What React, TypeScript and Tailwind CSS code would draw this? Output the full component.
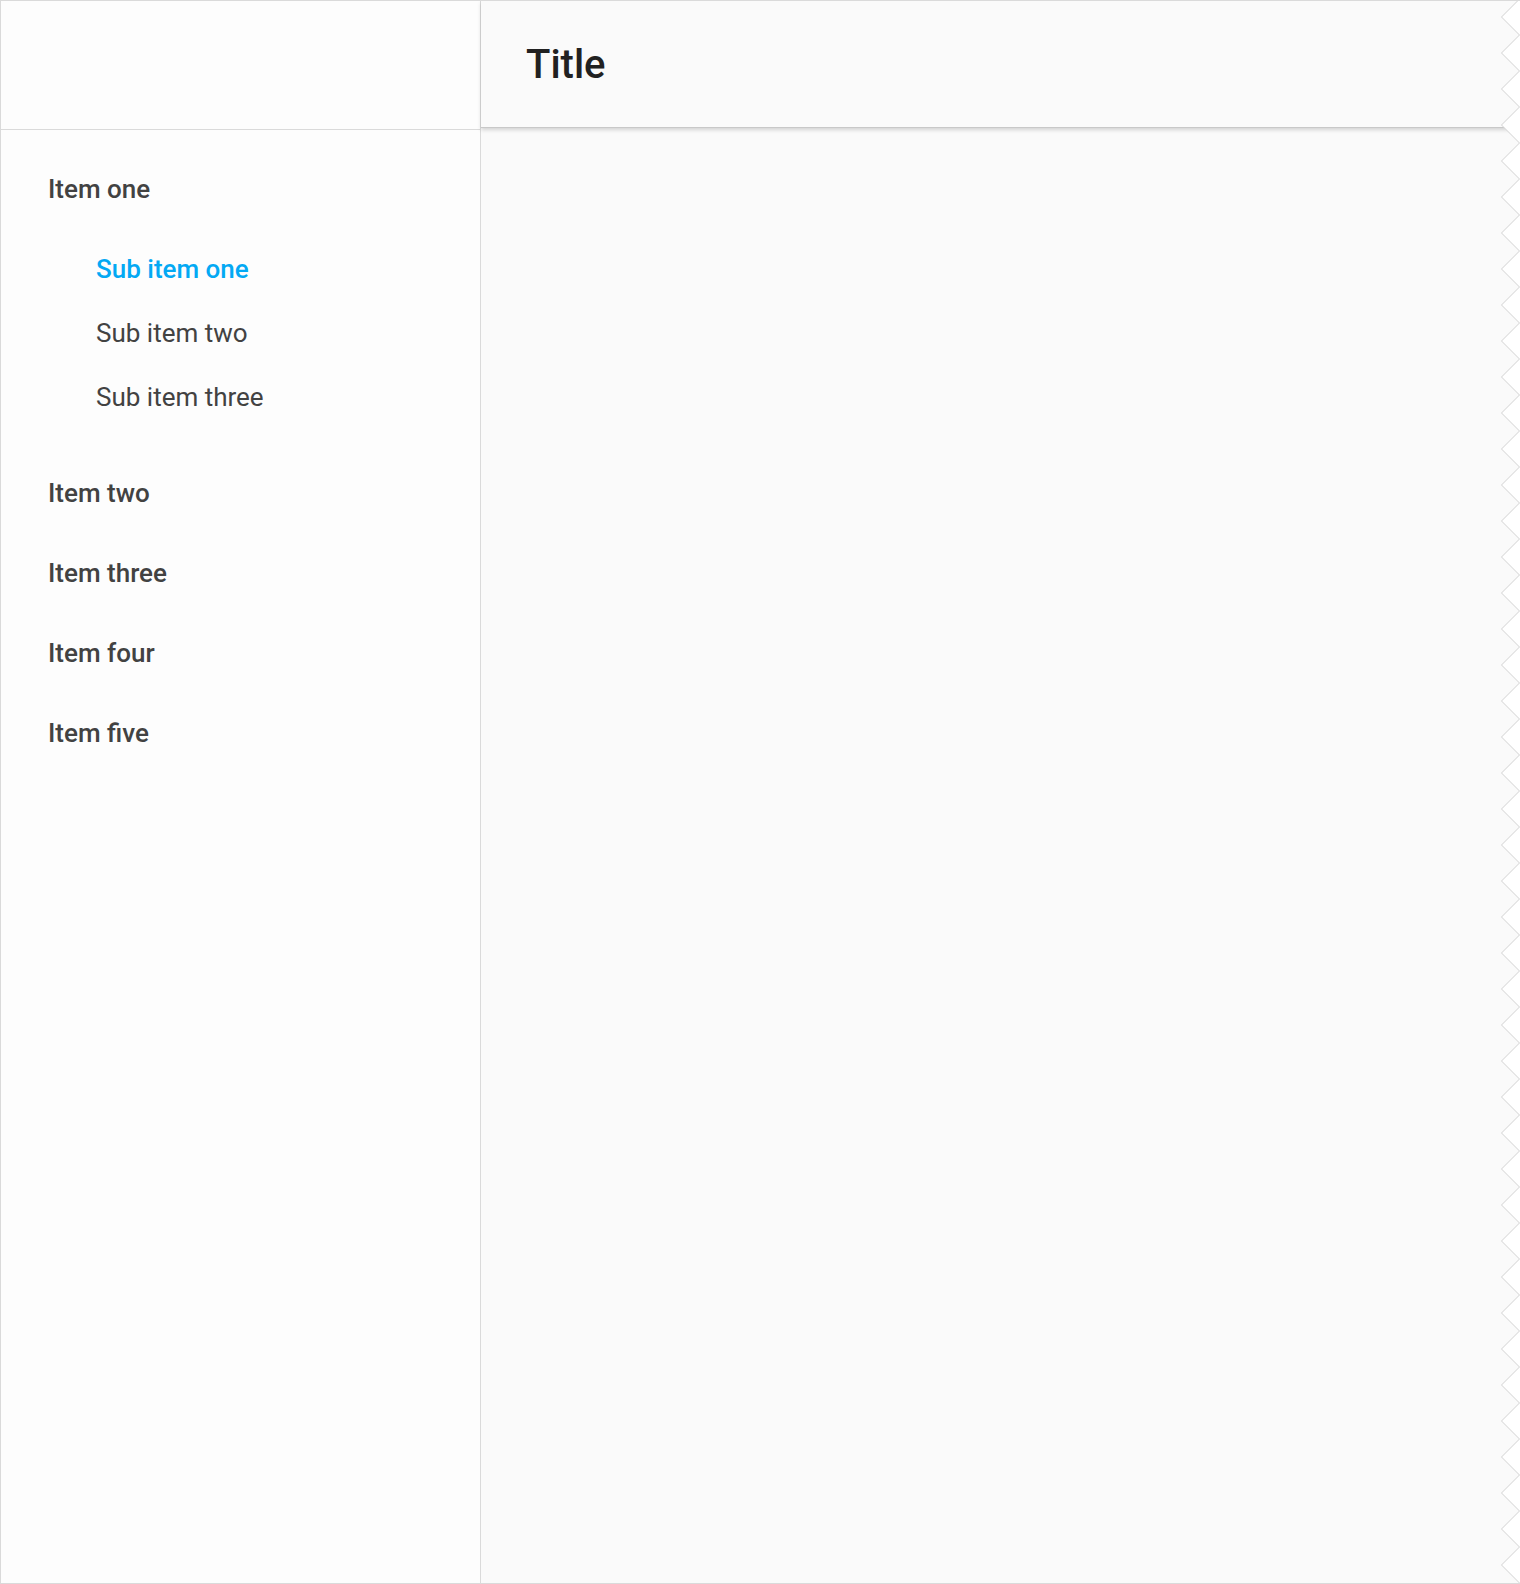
import React from 'react'

const subItems = [
  { label: 'Sub item one', active: true },
  { label: 'Sub item two', active: false },
  { label: 'Sub item three', active: false },
]

const items = ['Item two', 'Item three', 'Item four', 'Item five']

const TornEdge = () => {
  // zigzag down the right edge, 36px period
  const pts: string[] = []
  for (let k = 0; k <= 45; k++) {
    pts.push(`19.5,${-1 + 36 * k}`)
    pts.push(`1.5,${17 + 36 * k}`)
  }
  const line = pts.join(' ')
  return (
    <svg
      className="absolute top-[-1px] right-0 pointer-events-none"
      width="20"
      height="1584"
      viewBox="0 0 20 1584"
    >
      <polygon points={`20,-2 ${line} 20,1700`} fill="#ffffff" />
      <polyline points={line} fill="none" stroke="#d2d2d2" strokeWidth="1" />
    </svg>
  )
}

const App = () => {
  return (
    <div
      className="relative flex w-[1520px] h-[1584px] overflow-hidden border-t border-l border-b border-[#dadada] bg-white"
      style={{ fontFamily: 'Roboto, "Noto Sans", sans-serif' }}
    >
      <aside className="flex flex-col w-[480px] shrink-0 border-r border-[#dadada] bg-[#fdfdfd]">
        <div className="h-[129px] shrink-0 border-b border-[#dadada]" />
        <nav className="pt-[19px] pl-[47px] text-[26px] text-[#424242]">
          <div className="h-20 leading-[80px] font-medium">Item one</div>
          <div className="pt-2 pl-12">
            {subItems.map((s) => (
              <div
                key={s.label}
                className={
                  s.active
                    ? 'h-16 leading-[64px] font-medium text-[#03a9f4]'
                    : 'h-16 leading-[64px] font-normal'
                }
              >
                {s.label}
              </div>
            ))}
          </div>
          <div className="pt-6">
            {items.map((label) => (
              <div key={label} className="h-20 leading-[80px] font-medium">
                {label}
              </div>
            ))}
          </div>
        </nav>
      </aside>

      <main className="flex-1 flex flex-col bg-[#fafafa]">
        <header className="h-[127px] shrink-0 flex items-center pl-[45px] pt-[2px] border-b border-[#c8c8c8] shadow-[0_2px_4px_rgba(0,0,0,0.16)] bg-[#fafafa]">
          <h1 className="text-[40px] font-medium text-[#212121]">Title</h1>
        </header>
        <div className="flex-1" />
      </main>

      <TornEdge />
    </div>
  )
}

export default App
